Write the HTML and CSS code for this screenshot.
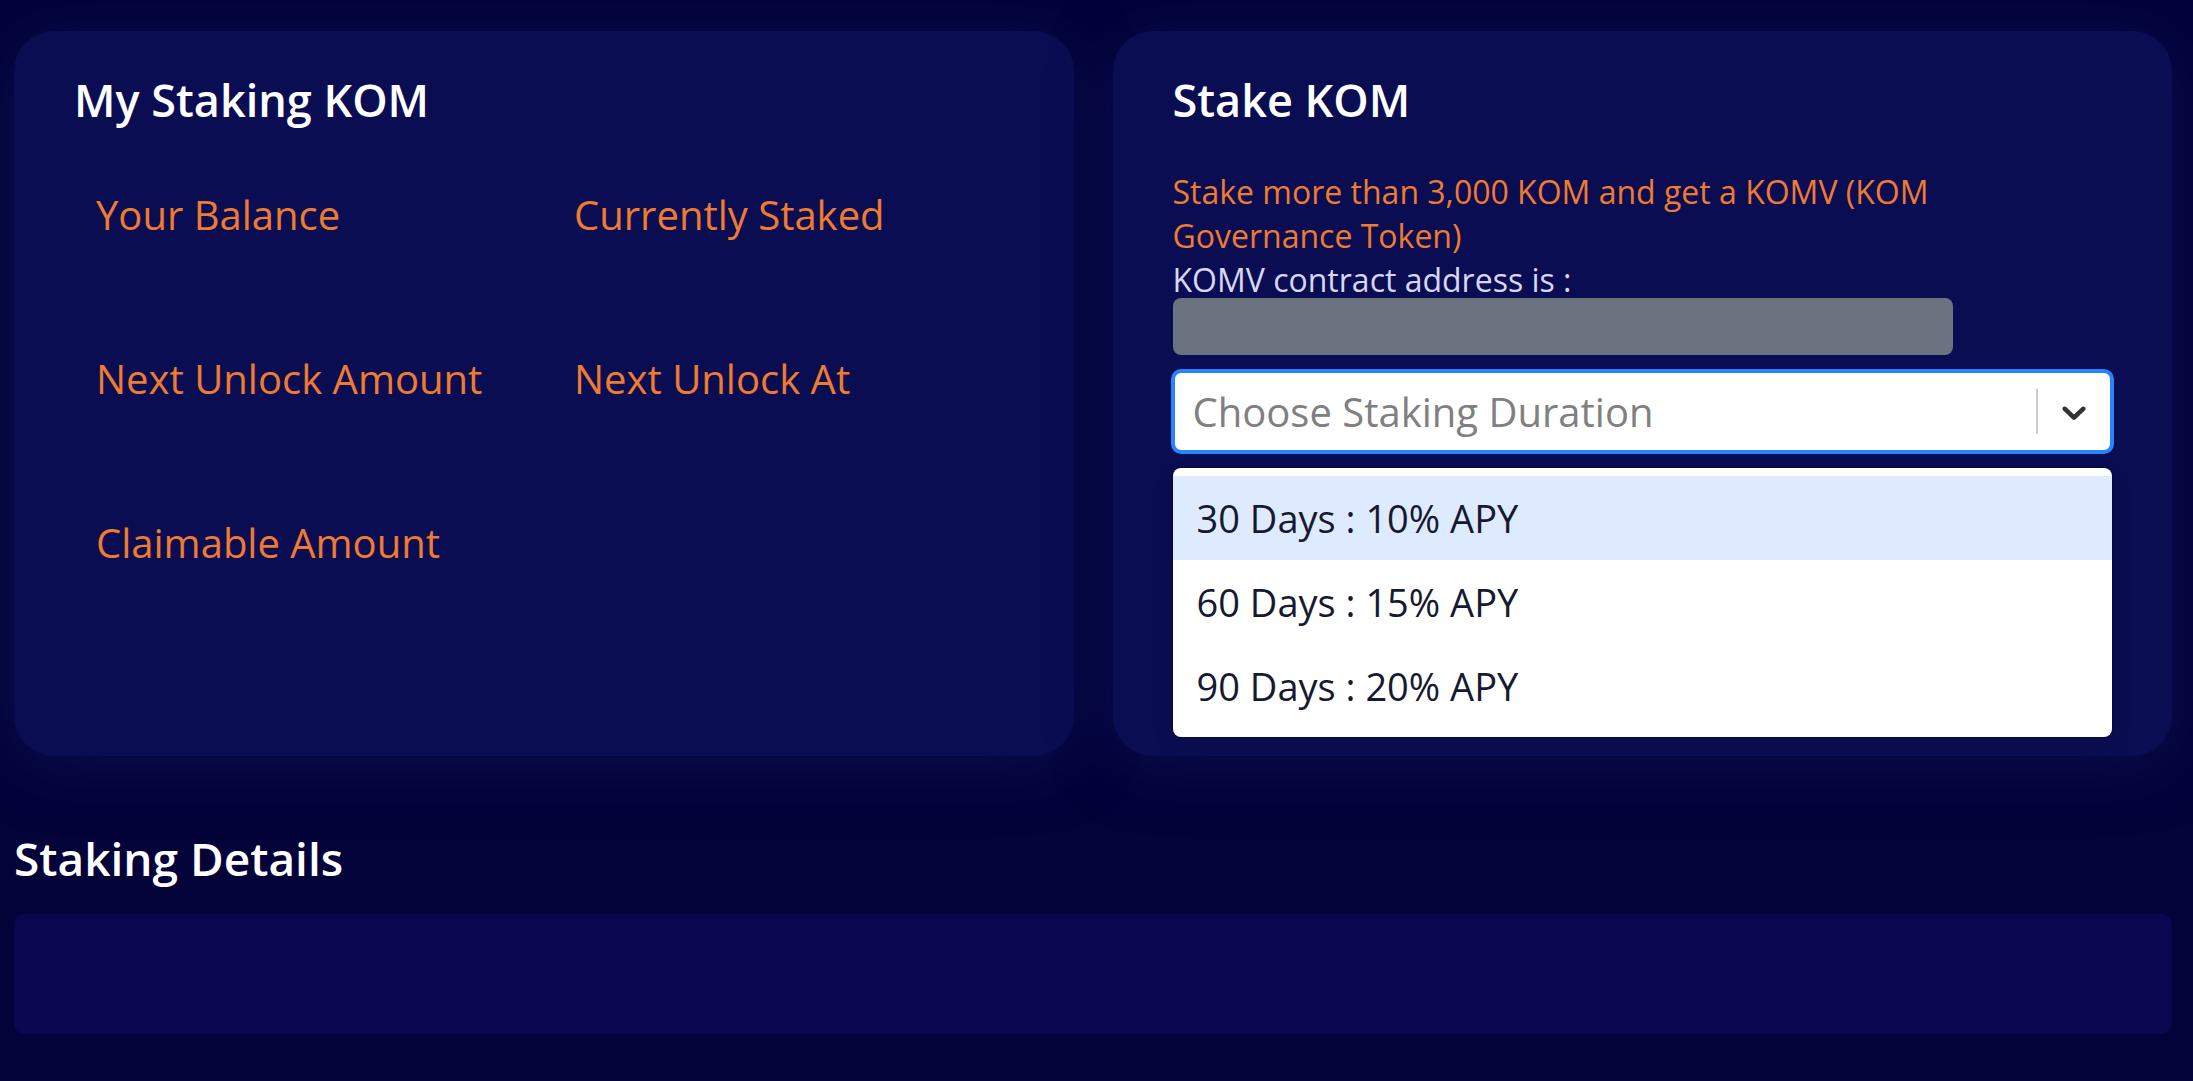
FILE: index.html
```html
<!DOCTYPE html>
<html lang="en">
<head>
    <meta charset="UTF-8" />
    <meta name="viewport" content="width=device-width, initial-scale=1.0"/>
    <title>Staking KOM</title>
    <link rel="stylesheet" href="styles.css">
</head>
<body>
<div class="page">
    <div class="cards">
        <section class="card">
            <h2 class="card-title">My Staking KOM</h2>
            <div class="stats">
                <div class="stat"><span class="stat-label">Your Balance</span></div>
                <div class="stat"><span class="stat-label">Currently Staked</span></div>
                <div class="stat"><span class="stat-label">Next Unlock Amount</span></div>
                <div class="stat"><span class="stat-label">Next Unlock At</span></div>
                <div class="stat"><span class="stat-label">Claimable Amount</span></div>
            </div>
        </section>

        <section class="card">
            <h2 class="card-title">Stake KOM</h2>
            <p class="notice">Stake more than 3,000 KOM and get a KOMV (KOM Governance Token)</p>
            <p class="contract-label">KOMV contract address is :</p>
            <div class="contract-box"></div>

            <div class="select">
                <div class="select-value">Choose Staking Duration</div>
                <span class="select-sep"></span>
                <div class="select-arrow">
                    <svg width="40" height="40" viewBox="0 0 20 20"><path d="M4.516 7.548c0.436-0.446 1.043-0.481 1.576 0l3.908 3.747 3.908-3.747c0.533-0.481 1.141-0.446 1.574 0 0.436 0.445 0.408 1.197 0 1.615-0.406 0.418-4.695 4.502-4.695 4.502-0.217 0.223-0.502 0.335-0.787 0.335s-0.57-0.112-0.789-0.335c0 0-4.287-4.084-4.695-4.502s-0.436-1.17 0-1.615z" fill="#333"/></svg>
                </div>
            </div>
            <ul class="select-menu">
                <li class="option focused">30 Days : 10% APY</li>
                <li class="option">60 Days : 15% APY</li>
                <li class="option">90 Days : 20% APY</li>
            </ul>
        </section>
    </div>

    <h2 class="section-title">Staking Details</h2>
    <div class="details-box"></div>
</div>
</body>
</html>
```

FILE: styles.css
```css
body {
    font-family: 'Open Sans', sans-serif;
    background: #03033a;
    margin: 0;
    padding: 0;
    color: #ffffff;
}
.page {
    padding: 31px 21px 47px 14px;
}
.cards {
    display: grid;
    grid-template-columns: 1fr 1fr;
    gap: 39px;
}
.card {
    background: #0b0d52;
    border-radius: 40px;
    height: 725px;
    box-sizing: border-box;
    padding: 40px 60px 0 60px;
    box-shadow: 0 10px 60px rgba(16, 18, 92, 0.55);
}
.card-title {
    margin: 0;
    font-size: 45px;
    font-weight: 600;
    line-height: 57px;
}
.stats {
    display: grid;
    grid-template-columns: 478px 1fr;
    grid-auto-rows: 164px;
    padding-left: 22px;
    margin-top: 64px;
}
.stat-label {
    display: block;
    color: #ed7b31;
    font-size: 40px;
    font-weight: 500;
    line-height: 46px;
}
.notice {
    margin: 42px 0 0;
    color: #ed7b31;
    font-size: 32px;
    line-height: 44px;
    max-width: 790px;
}
.contract-label {
    margin: 4px 0 0;
    color: #d6d7f4;
    font-size: 32px;
    line-height: 36px;
}
.contract-box {
    width: 780px;
    height: 57px;
    background: #6b7280;
    border-radius: 8px;
}
.select {
    margin-top: 16px;
    height: 81px;
    box-sizing: border-box;
    display: flex;
    align-items: center;
    background: #ffffff;
    border: 2px solid #2684ff;
    box-shadow: 0 0 0 2px #2684ff;
    border-radius: 8px;
}
.select-value {
    flex: 1;
    padding-left: 18px;
    color: #808080;
    font-size: 40px;
}
.select-sep {
    width: 2px;
    height: 45px;
    background: #cccccc;
}
.select-arrow {
    display: flex;
    padding: 16px;
}
.select-menu {
    list-style: none;
    margin: 16px 0 0;
    padding: 8px 0 9px;
    background: #ffffff;
    border-radius: 8px;
    box-shadow: 0 0 0 2px rgba(0, 0, 0, 0.1), 0 8px 22px rgba(0, 0, 0, 0.1);
}
.option {
    height: 84px;
    display: flex;
    align-items: center;
    padding: 0 24px;
    color: #161a30;
    font-size: 38px;
}
.option.focused {
    background: #deebff;
}
.section-title {
    margin: 74px 0 0;
    font-size: 46px;
    font-weight: 600;
    line-height: 57px;
}
.details-box {
    margin-top: 27px;
    height: 120px;
    background: #0a0750;
    border-radius: 10px;
}
```
